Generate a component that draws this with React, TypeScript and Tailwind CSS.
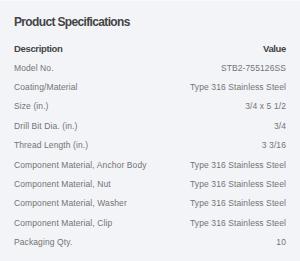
const specs: [string, string][] = [
  ['Model No.', 'STB2-755126SS'],
  ['Coating/Material', 'Type 316 Stainless Steel'],
  ['Size (in.)', '3/4 x 5 1/2'],
  ['Drill Bit Dia. (in.)', '3/4'],
  ['Thread Length (in.)', '3 3/16'],
  ['Component Material, Anchor Body', 'Type 316 Stainless Steel'],
  ['Component Material, Nut', 'Type 316 Stainless Steel'],
  ['Component Material, Washer', 'Type 316 Stainless Steel'],
  ['Component Material, Clip', 'Type 316 Stainless Steel'],
  ['Packaging Qty.', '10'],
]

export default function App() {
  return (
    <div
      className="w-[300px] h-[261px] bg-[#f3f4f8] border-t border-[#f8f9fb] px-[14px] pt-[13px]"
      style={{ fontFamily: '"Liberation Sans", Arial, sans-serif' }}
    >
      <h2 className="text-[12px] leading-[16px] font-semibold text-[#444] tracking-[-0.65px] mb-[9px]">
        Product Specifications
      </h2>

      {/* Table header */}
      <div className="h-[19.4px] flex items-center justify-between text-[9.5px] font-semibold text-[#444] tracking-[-0.35px]">
        <span>Description</span>
        <span>Value</span>
      </div>

      {/* Rows */}
      {specs.map(([label, value]) => (
        <div
          key={label}
          className="h-[19.4px] flex items-center justify-between text-[8.5px] text-[#737373] tracking-[0.1px]"
        >
          <span>{label}</span>
          <span>{value}</span>
        </div>
      ))}
    </div>
  )
}
